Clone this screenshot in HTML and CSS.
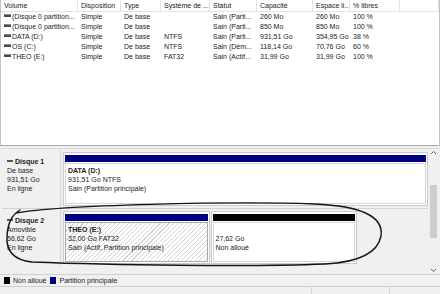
FILE: index.html
```html
<!DOCTYPE html>
<html lang="fr">
<head>
  <meta charset="UTF-8">
  <title>Gestion des disques</title>
  <link rel="stylesheet" href="styles.css">
</head>
<body>
  <!-- Volume list -->
  <div class="list">
    <div class="cols head">
      <div>Volume</div>
      <div>Disposition</div>
      <div>Type</div>
      <div>Système de ...</div>
      <div>Statut</div>
      <div>Capacité</div>
      <div>Espace li...</div>
      <div>% libres</div>
      <div></div>
    </div>
    <div class="cols row">
      <div><i class="vicon"></i>(Disque 0 partition...</div>
      <div>Simple</div><div>De base</div><div></div><div>Sain (Parti...</div>
      <div>260 Mo</div><div>260 Mo</div><div>100 %</div><div></div>
    </div>
    <div class="cols row">
      <div><i class="vicon"></i>(Disque 0 partition...</div>
      <div>Simple</div><div>De base</div><div></div><div>Sain (Parti...</div>
      <div>850 Mo</div><div>850 Mo</div><div>100 %</div><div></div>
    </div>
    <div class="cols row">
      <div><i class="vicon"></i>DATA (D:)</div>
      <div>Simple</div><div>De base</div><div>NTFS</div><div>Sain (Parti...</div>
      <div>931,51 Go</div><div>354,95 Go</div><div>38 %</div><div></div>
    </div>
    <div class="cols row">
      <div><i class="vicon"></i>OS (C:)</div>
      <div>Simple</div><div>De base</div><div>NTFS</div><div>Sain (Dém...</div>
      <div>118,14 Go</div><div>70,76 Go</div><div>60 %</div><div></div>
    </div>
    <div class="cols row">
      <div><i class="vicon"></i>THEO (E:)</div>
      <div>Simple</div><div>De base</div><div>FAT32</div><div>Sain (Actif...</div>
      <div>31,99 Go</div><div>31,99 Go</div><div>100 %</div><div></div>
    </div>
  </div>

  <!-- Disk graphs -->
  <div class="lower">
    <div class="disks">
      <div class="disk">
        <div class="dlabel">
          <b><i class="dicon"></i>Disque 1</b>
          <span>De base</span>
          <span>931,51 Go</span>
          <span>En ligne</span>
        </div>
        <div class="graph">
          <div class="part">
            <div class="bar primary"></div>
            <div class="pbody">
              <b>DATA (D:)</b>
              <span>931,51 Go NTFS</span>
              <span>Sain (Partition principale)</span>
            </div>
          </div>
        </div>
      </div>
      <div class="disk disk2">
        <div class="dlabel">
          <b><i class="dicon"></i>Disque 2</b>
          <span>Amovible</span>
          <span>56,62 Go</span>
          <span>En ligne</span>
        </div>
        <div class="graph short">
          <div class="part">
            <div class="bar primary"></div>
            <div class="pbody hatched">
              <b>THEO (E:)</b>
              <span>32,00 Go FAT32</span>
              <span>Sain (Actif, Partition principale)</span>
            </div>
          </div>
          <div class="part">
            <div class="bar free"></div>
            <div class="pbody">
              <span>&nbsp;</span>
              <span>27,62 Go</span>
              <span>Non alloué</span>
            </div>
          </div>
        </div>
      </div>
    </div>
    <div class="vscroll">
      <svg width="11" height="8" viewBox="0 0 11 8"><path d="M3 5 L5.5 2.5 L8 5" fill="none" stroke="#606060" stroke-width="1"/></svg>
      <div class="track"><div class="thumb"></div></div>
      <svg width="11" height="8" viewBox="0 0 11 8"><path d="M3 3 L5.5 5.5 L8 3" fill="none" stroke="#606060" stroke-width="1"/></svg>
    </div>
  </div>

  <div class="legend">
    <i class="swatch free"></i><span>Non alloué</span>
    <i class="swatch primary"></i><span>Partition principale</span>
  </div>
  <div class="status"><span></span><span></span><span></span></div>

  <!-- hand-drawn loop around disk 2 -->
  <svg class="scribble" width="440" height="294" viewBox="0 0 440 294">
    <path d="M16 213 C60 205 230 201 315 204 C360 206 384 216 381 236 C378 252 362 262 325 264 C250 267 110 265 32 262 C13 260 6 250 7 236 C8 222 12 215 20 210" fill="none" stroke="#141414" stroke-width="1.4" stroke-linecap="round"/>
  </svg>
</body>
</html>
```

FILE: styles.css
```css
body {
  margin: 0;
  width: 440px;
  height: 294px;
  position: relative;
  overflow: hidden;
  background: #f0f0f0;
  font-family: "Liberation Sans", Arial, sans-serif;
  font-size: 7px;
  color: #1b1b1b;
}
/* Volume list */
.list {
  height: 145px;
  background: #fff;
  border-left: 1px solid #c4c4c4;
  border-right: 1px solid #c4c4c4;
  border-bottom: 1px solid #a9a9a9;
}
.cols {
  display: grid;
  grid-template-columns: 77px 43px 40px 49px 47px 56px 37px 50px 1fr;
}
.cols > div {
  padding-left: 3px;
  white-space: nowrap;
  overflow: hidden;
}
.head {
  height: 11px;
  line-height: 11px;
  border-bottom: 1px solid #e3e3e3;
}
.head > div {
  border-right: 1px solid #e3e3e3;
}
.row {
  height: 10px;
  line-height: 10px;
}
.vicon {
  display: inline-block;
  width: 7px;
  height: 2px;
  margin-right: 1px;
  vertical-align: 2px;
  background: #4a4a4a;
  border-top: 1px solid #8a8a8a;
}
/* Lower pane */
.lower {
  display: flex;
  height: 126px;
  margin-top: 2px;
  border-top: 1px solid #d9d9d9;
  box-sizing: border-box;
}
.disks {
  flex: 1;
  padding: 1px 0 0 2px;
}
.disk {
  display: flex;
  gap: 2px;
  height: 58px;
  border-bottom: 1px solid #d2d2d2;
}
.disk2 {
  height: 57px;
  border-bottom: none;
}
.dlabel {
  width: 53px;
  padding: 7px 0 0 5px;
  display: flex;
  flex-direction: column;
  line-height: 9px;
  border-right: 1px solid #d2d2d2;
}
.dicon {
  display: inline-block;
  width: 6px;
  height: 2px;
  margin-right: 2px;
  vertical-align: 2px;
  background: #555;
}
.graph {
  flex: 1;
  display: flex;
  gap: 1px;
  padding: 2px 0 2px;
}
.graph.short {
  flex: none;
  width: 294px;
}
.part {
  flex: 1;
  display: flex;
  flex-direction: column;
  background: #fff;
  border: 1px solid #c9c9c9;
  padding: 2px 1px 1px;
}
.bar {
  height: 7px;
}
.primary {
  background: #000080;
}
.free {
  background: #000;
}
.pbody {
  flex: 1;
  margin-top: 1px;
  padding: 2px 2px 0;
  display: flex;
  flex-direction: column;
  line-height: 9px;
  border: 1px solid #d6d6d6;
}
.hatched {
  border-color: #a8a8a8;
  background: repeating-linear-gradient(135deg, #fff 0 2.4px, #d4d4d4 2.4px 3.2px);
}
/* Scrollbar */
.vscroll {
  width: 11px;
  margin-right: 1px;
  display: flex;
  flex-direction: column;
  background: #f0f0f0;
}
.track {
  flex: 1;
  padding: 28px 2px 0;
}
.thumb {
  height: 53px;
  background: #cdcdcd;
}
/* Legend and status */
.legend {
  height: 11px;
  display: flex;
  align-items: center;
  gap: 3px;
  padding-left: 4px;
  border-top: 1px solid #cfcfcf;
  border-bottom: 1px solid #cfcfcf;
}
.legend span {
  margin-right: 1px;
}
.swatch {
  width: 6px;
  height: 7px;
}
.status {
  display: flex;
  height: 7px;
}
.status span:nth-child(1) {
  width: 311px;
  border-right: 1px solid #d5d5d5;
}
.status span:nth-child(2) {
  width: 77px;
  border-right: 1px solid #d5d5d5;
}
.scribble {
  position: absolute;
  left: 0;
  top: 0;
  pointer-events: none;
}
```
